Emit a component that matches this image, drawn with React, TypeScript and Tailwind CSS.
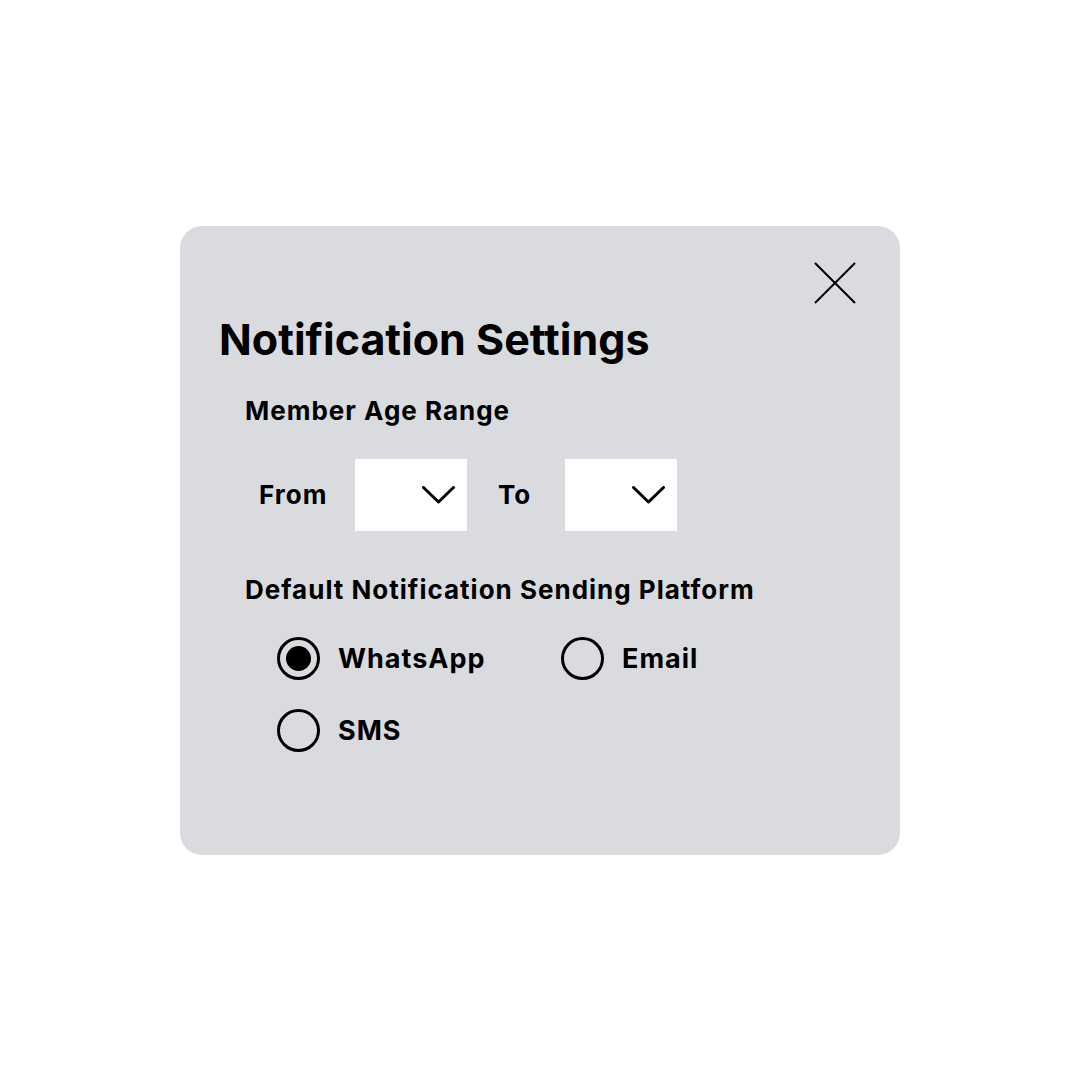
import React, { useState } from "react";

function Chevron() {
  return (
    <svg width="33" height="18" viewBox="0 0 33 18" fill="none">
      <path d="M1.5 1.5 L16.5 16 L31.5 1.5" stroke="#000" strokeWidth="3" strokeLinecap="round" strokeLinejoin="round" />
    </svg>
  );
}

function Select() {
  return (
    <div className="flex h-[72px] w-[112px] items-center justify-end bg-white pr-[12px]">
      <Chevron />
    </div>
  );
}

function Radio({ label, checked, onClick }: { label: string; checked: boolean; onClick: () => void }) {
  return (
    <button onClick={onClick} className="flex items-center gap-[18px] text-left">
      <span className="flex h-[43px] w-[43px] items-center justify-center rounded-full border-[3px] border-black">
        {checked && <span className="h-[25px] w-[25px] rounded-full bg-black" />}
      </span>
      <span className="text-[27px] font-bold leading-none tracking-[1px] text-black">{label}</span>
    </button>
  );
}

export default function App() {
  const [platform, setPlatform] = useState("WhatsApp");

  return (
    <div
      className="flex h-screen w-full items-center justify-center bg-white"
      style={{ fontFamily: "Inter, 'Noto Sans', sans-serif" }}
    >
      <div className="flex h-[629px] w-[720px] flex-col rounded-[22px] bg-[#d9dbdf] pl-[39px] pr-[44px] pt-[36px]">
        <div className="flex justify-end">
          <svg width="42" height="42" viewBox="0 0 42 42" fill="none">
            <path d="M1 1 L41 41 M41 1 L1 41" stroke="#000" strokeWidth="2" />
          </svg>
        </div>
        <h1 className="mt-[14px] text-[43px] font-bold leading-none text-black">
          Notification Settings
        </h1>
        <div className="ml-[26px] mt-[37px]">
          <h2 className="text-[26px] font-bold leading-none tracking-[1px] text-black">Member Age Range</h2>
          <div className="mt-[35px] flex items-center">
            <span className="ml-[14px] w-[96px] text-[26px] font-bold tracking-[1px] text-black">From</span>
            <Select />
            <span className="ml-[31px] w-[67px] text-[26px] font-bold tracking-[1px] text-black">To</span>
            <Select />
          </div>
          <h2 className="mt-[46px] text-[26px] font-bold leading-none tracking-[1px] text-black">
            Default Notification Sending Platform
          </h2>
          <div className="ml-[32px] mt-[34px] grid w-[420px] grid-cols-[284px_1fr] gap-y-[29px]">
            <Radio label="WhatsApp" checked={platform === "WhatsApp"} onClick={() => setPlatform("WhatsApp")} />
            <Radio label="Email" checked={platform === "Email"} onClick={() => setPlatform("Email")} />
            <Radio label="SMS" checked={platform === "SMS"} onClick={() => setPlatform("SMS")} />
          </div>
        </div>
      </div>
    </div>
  );
}
